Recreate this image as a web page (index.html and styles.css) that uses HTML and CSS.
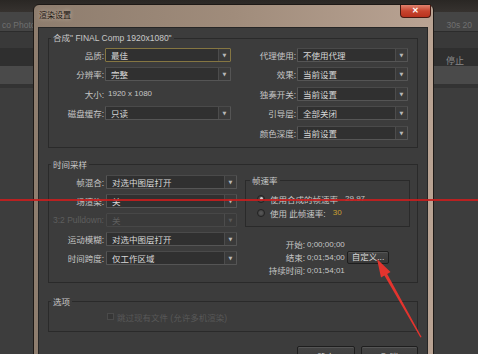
FILE: index.html
```html
<!DOCTYPE html>
<html lang="zh-CN">
<head>
    <meta charset="UTF-8">
    <title>渲染设置</title>
    <link rel="stylesheet" href="styles.css">
</head>
<body>
    <div class="app">
        <div class="appBar top"></div>
        <div class="appBar tabs"><span>co Photo</span><span>30s 20</span></div>
        <div class="appBar mid"></div>
        <div class="appBar dark"><span></span><span class="stopBtn">停止</span></div>
        <div class="appBar light"></div>
        <div class="appBar line"></div>
    </div>

    <div class="dialog">
        <div class="titleBar">
            <span class="title">渲染设置</span>
            <span class="closeBtn">✕</span>
        </div>
        <div class="client">
            <fieldset class="group compGroup">
                <legend>合成" FINAL Comp 1920x1080"</legend>
                <div class="cols">
                    <div class="form compLeft">
                        <label>品质:</label><div class="select focus">最佳</div>
                        <label>分辨率:</label><div class="select">完整</div>
                        <label>大小:</label><div class="plain">1920 x 1080</div>
                        <label>磁盘缓存:</label><div class="select">只读</div>
                    </div>
                    <div class="form compRight">
                        <label>代理使用:</label><div class="select">不使用代理</div>
                        <label>效果:</label><div class="select">当前设置</div>
                        <label>独奏开关:</label><div class="select">当前设置</div>
                        <label>引导层:</label><div class="select">全部关闭</div>
                        <label>颜色深度:</label><div class="select">当前设置</div>
                    </div>
                </div>
            </fieldset>

            <fieldset class="group timeGroup">
                <legend>时间采样</legend>
                <div class="cols">
                    <div class="form timeLeft">
                        <label>帧混合:</label><div class="select">对选中图层打开</div>
                        <label>场渲染:</label><div class="select">关</div>
                        <label class="disabled">3:2 Pulldown:</label><div class="select disabled">关</div>
                        <label>运动模糊:</label><div class="select">对选中图层打开</div>
                        <label>时间跨度:</label><div class="select">仅工作区域</div>
                    </div>
                    <div class="timeRight">
                        <fieldset class="group rateGroup">
                            <legend>帧速率</legend>
                            <div class="radioRow"><span class="radio checked"></span>使用合成的帧速率 <span class="num">29.97</span></div>
                            <div class="radioRow"><span class="radio"></span>使用 此帧速率: <span class="rate">30</span></div>
                        </fieldset>
                        <div class="times">
                            <label>开始:</label><span class="val">0;00;00;00</span><span></span>
                            <label>结束:</label><span class="val">0;01;54;00</span><button class="btn small">自定义...</button>
                            <label>持续时间:</label><span class="val">0;01;54;01</span><span></span>
                        </div>
                    </div>
                </div>
            </fieldset>

            <fieldset class="group optGroup">
                <legend>选项</legend>
                <div class="checkRow"><span class="check"></span>跳过现有文件 (允许多机渲染)</div>
            </fieldset>

            <div class="buttons">
                <button class="btn ok">确定</button>
                <button class="btn cancel">取消</button>
            </div>
        </div>
    </div>

    <div class="redLine"></div>
    <svg class="arrow" width="478" height="354" viewBox="0 0 478 354">
        <polygon points="377,259 390.5,272 387.2,274 421.6,337 420.4,337.4 384.4,275.6 381,277.6" fill="#e3342e"/>
    </svg>
</body>
</html>
```

FILE: styles.css
```css
* {
    margin: 0;
    padding: 0;
    box-sizing: border-box;
}
body {
    width: 478px;
    height: 354px;
    overflow: hidden;
    position: relative;
    background-color: #3d3d3d;
    font-family: 'Liberation Sans', 'Noto Sans CJK SC', sans-serif;
    font-size: 8.5px;
    color: #c6c6c6;
}

/* app behind the dialog */
.app {
    display: flex;
    flex-direction: column;
}
.appBar {
    display: flex;
    justify-content: space-between;
    align-items: center;
    padding: 0 6px 0 2px;
    color: #707070;
}
.appBar.top { height: 12px; background: linear-gradient(#2a2724, #36322f); }
.appBar.tabs { height: 20px; background-color: #454545; border-bottom: 1px solid #2c2c2c; padding-top: 6px; }
.appBar.mid { height: 16px; background-color: #393939; }
.appBar.dark { height: 18px; background-color: #2f2f2f; }
.appBar.light { height: 18px; background-color: #4a4a4a; }
.appBar.line { height: 4px; background-color: #333; }
.stopBtn {
    color: #8a8a8a;
    font-size: 9px;
    margin-right: 8px;
    margin-top: 6px;
}

/* dialog window */
.dialog {
    position: absolute;
    left: 33px;
    top: 4px;
    width: 401px;
    height: 362px;
    border: 1px solid #1d1916;
    border-radius: 6px 6px 0 0;
    background: linear-gradient(to right, #8e7d6e, #a08c7b 50%, #b9a393);
    padding: 0 5px 0 4px;
}
.titleBar {
    height: 22px;
    display: flex;
    align-items: flex-start;
}
.title {
    margin: 4px 0 0 1px;
    color: #1c1612;
    font-size: 8px;
    text-shadow: 0 0 4px rgba(255, 240, 225, 0.6);
}
.closeBtn {
    margin-left: auto;
    margin-right: -3px;
    width: 31px;
    height: 13px;
    border: 1px solid #4a1a12;
    border-top: none;
    border-radius: 0 0 4px 4px;
    background: linear-gradient(#e0826e, #c7442e 50%, #b8321e);
    color: #fff;
    font-size: 8px;
    font-weight: bold;
    text-align: center;
    line-height: 12px;
}
.client {
    height: 339px;
    background-color: #3c3c3c;
    border: 1px solid #262626;
    padding: 3px 9px 0;
}

/* group boxes */
.group {
    border: 1px solid #2a2a2a;
    padding: 0;
    min-width: 0;
}
.group legend {
    margin-left: 2px;
    padding: 0 2px;
    line-height: 14px;
    color: #c8c8c8;
}
.cols {
    display: flex;
}
.form {
    display: grid;
    align-items: center;
    column-gap: 1px;
}
.form label {
    text-align: right;
    white-space: nowrap;
}
.form label.disabled {
    color: #5e5e5e;
}
.compLeft {
    grid-template-columns: 55px 126px;
    grid-auto-rows: 19.5px;
    align-content: start;
}
.compRight {
    margin-left: 8px;
    grid-template-columns: 57px 111px;
    grid-auto-rows: 19.5px;
}
.compGroup {
    padding-bottom: 4px;
}
.plain {
    padding-left: 3px;
    font-size: 8px;
}

.select {
    height: 14px;
    display: flex;
    align-items: center;
    background-color: #303030;
    border: 1px solid #555;
    border-top-color: #4a4a4a;
    border-radius: 1px;
    padding-left: 5px;
    color: #d8d8d8;
    white-space: nowrap;
}
.select::after {
    content: "▼";
    margin-left: auto;
    width: 11px;
    height: 12px;
    border-left: 1px solid #4c4c4c;
    background-color: #3a3a3a;
    color: #b8b8b8;
    font-family: 'DejaVu Sans', sans-serif;
    font-size: 5px;
    line-height: 12px;
    text-align: center;
}
.select.focus {
    border-color: #857642;
}
.select.disabled {
    background-color: #3a3a3a;
    border-color: #474747;
    color: #5e5e5e;
}
.select.disabled::after {
    color: #5a5a5a;
    background-color: #3a3a3a;
}

/* time sampling */
.timeGroup {
    margin-top: 10px;
    padding: 1px 0 5px;
}
.timeLeft {
    grid-template-columns: 55px 131px;
    grid-auto-rows: 19px;
    column-gap: 2px;
    align-content: start;
}
.timeRight {
    margin-left: 8px;
    width: 165px;
}
.rateGroup {
    margin-top: 1px;
    padding: 4px 0 6px;
}
.rateGroup legend {
    margin-left: 4px;
}
.radioRow {
    height: 14px;
    display: flex;
    align-items: center;
    gap: 5px;
    padding-left: 11px;
    white-space: nowrap;
}
.radio {
    width: 8px;
    height: 8px;
    border-radius: 50%;
    border: 1px solid #222;
    background: radial-gradient(#5a5a5a, #3a3a3a);
    display: flex;
    align-items: center;
    justify-content: center;
}
.radio.checked::after {
    content: "";
    width: 3px;
    height: 3px;
    border-radius: 50%;
    background-color: #d0d0d0;
}
.num {
    margin-left: 2px;
    font-size: 8px;
}
.rate {
    color: #c9a032;
    font-size: 8px;
    margin-left: 2px;
}
.times {
    margin-top: 11px;
    display: grid;
    grid-template-columns: 61px 41px auto;
    grid-auto-rows: 13px;
    align-items: center;
}
.times label {
    text-align: right;
    padding-right: 1px;
}
.val {
    padding-left: 1px;
    font-size: 8px;
}
.btn {
    font-family: inherit;
    font-size: 8.5px;
    color: #d8d8d8;
    background: linear-gradient(#444, #383838);
    border: 1px solid #1e1e1e;
    border-radius: 2px;
    box-shadow: inset 0 1px 0 #555;
}
.btn.small {
    width: 42px;
    height: 13px;
    line-height: 11px;
}

/* options */
.optGroup {
    margin-top: 12px;
    padding: 1px 0 7px;
}
.checkRow {
    height: 14px;
    display: flex;
    align-items: center;
    gap: 3px;
    padding-left: 58px;
    color: #585858;
}
.check {
    width: 7px;
    height: 7px;
    border: 1px solid #4a4a4a;
    background-color: #363636;
}

.buttons {
    margin-top: 14px;
    display: flex;
    justify-content: flex-end;
    gap: 6px;
}
.btn.ok { width: 58px; height: 20px; }
.btn.cancel { width: 57px; height: 20px; }

/* annotation marks */
.redLine {
    position: absolute;
    left: 0;
    top: 199px;
    width: 100%;
    height: 2px;
    background-color: rgba(198, 30, 30, 0.9);
}
.arrow {
    position: absolute;
    left: 0;
    top: 0;
}
```
